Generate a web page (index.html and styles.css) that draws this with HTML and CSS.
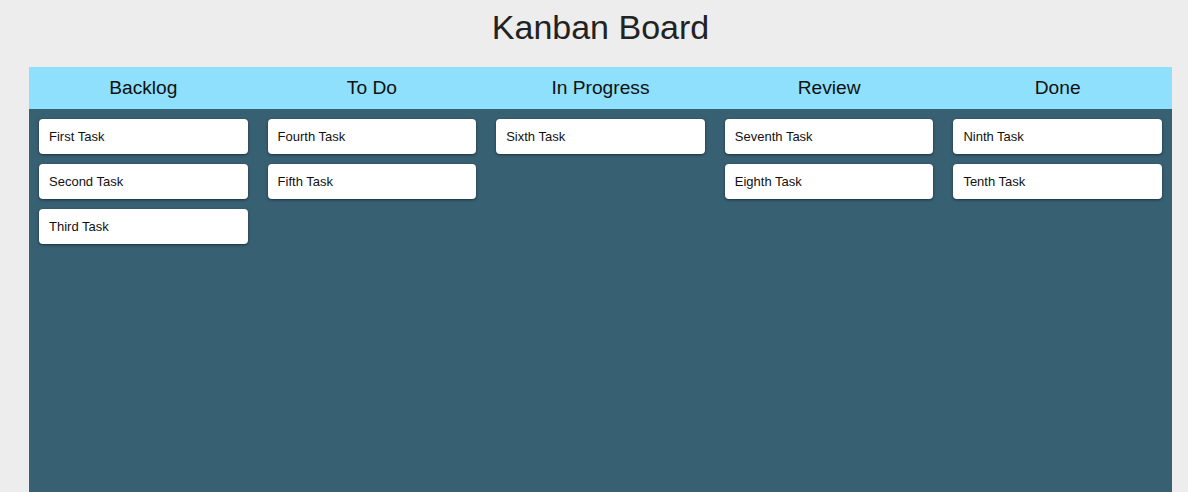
FILE: index.html
```html
<!doctype html>
<html>
<head>
<meta charset="utf-8">
<link rel="stylesheet" href="styles.css">
<title>Kanban Board</title>
</head>

<body>

<div class="page">
<h1 class="title">Kanban Board</h1>

<div class="board">
	<div class="column">
		<div class="column-head">Backlog</div>
		<div class="column-body">
			<div class="card">First Task</div>
			<div class="card">Second Task</div>
			<div class="card">Third Task</div>
		</div>
	</div>
	<div class="column">
		<div class="column-head">To Do</div>
		<div class="column-body">
			<div class="card">Fourth Task</div>
			<div class="card">Fifth Task</div>
		</div>
	</div>
	<div class="column">
		<div class="column-head">In Progress</div>
		<div class="column-body">
			<div class="card">Sixth Task</div>
		</div>
	</div>
	<div class="column">
		<div class="column-head">Review</div>
		<div class="column-body">
			<div class="card">Seventh Task</div>
			<div class="card">Eighth Task</div>
		</div>
	</div>
	<div class="column">
		<div class="column-head">Done</div>
		<div class="column-body">
			<div class="card">Ninth Task</div>
			<div class="card">Tenth Task</div>
		</div>
	</div>
</div>
</div>

</body>
</html>
```

FILE: styles.css
```css
*
{
	box-sizing:border-box;
}
body
{
	margin:0;
	background-color:#ededed;
	font-family:"Liberation Sans", Arial, sans-serif;
	color:#222;
}
.page
{
	margin:0 16px 0 29px;
}
.title
{
	margin:8px 0 20px;
	font-size:34px;
	line-height:39px;
	font-weight:normal;
	text-align:center;
	color:#222;
}
.board
{
	display:grid;
	grid-template-columns:repeat(5, 1fr);
	min-height:440px;
}
.column
{
	display:flex;
	flex-direction:column;
}
.column-head
{
	height:42px;
	line-height:42px;
	text-align:center;
	font-size:19.2px;
	background-color:#8ee0fd;
	color:#111;
}
.column-body
{
	flex:1;
	display:flex;
	flex-direction:column;
	gap:10px;
	padding:10px 10px;
	background-color:#386073;
}
.card
{
	height:35px;
	line-height:35px;
	padding:0 10px;
	font-size:13px;
	background-color:#fff;
	color:#111;
	border-radius:4px;
	box-shadow:0 1px 3px rgba(0,0,0,0.5);
}
```
